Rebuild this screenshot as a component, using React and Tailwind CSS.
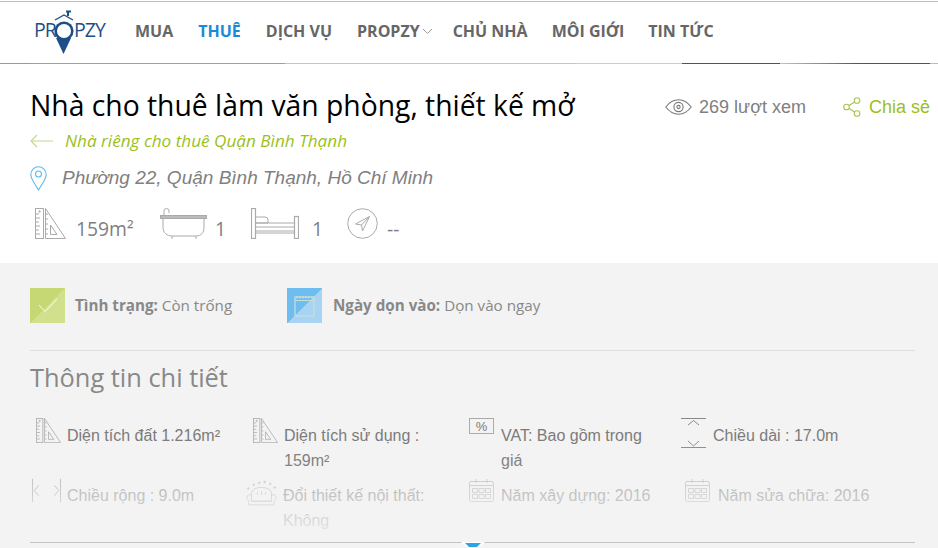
const navItems = [
  { label: 'MUA', cls: 'text-[#666] mr-[25px]' },
  { label: 'THUÊ', cls: 'text-[#1b8ad6] mr-[25px]' },
  { label: 'DỊCH VỤ', cls: 'text-[#666] mr-[25px]' },
  { label: 'PROPZY', cls: 'text-[#666]', caret: true },
  { label: 'CHỦ NHÀ', cls: 'text-[#666] mr-[24px]' },
  { label: 'MÔI GIỚI', cls: 'text-[#666] mr-[24px]' },
  { label: 'TIN TỨC', cls: 'text-[#666]' },
];

function Logo() {
  return (
    <div className="relative w-[72px] h-[50px] mt-[1px] shrink-0">
      <span className="absolute left-0 top-[8px] text-[19.5px] leading-[24px] font-medium text-[#1d4f86] font-['Open_Sans',sans-serif] tracking-[-0.9px]">PR</span>
      <span className="absolute left-[40px] top-[8px] text-[19.5px] leading-[24px] font-medium text-[#1d4f86] font-['Open_Sans',sans-serif] tracking-[-1px]">PZY</span>
      <svg className="absolute left-[15px] top-0" width="30" height="46" viewBox="0 0 30 46" fill="none">
        <path d="M6 10 L15 5 L24 10" stroke="#1d4f86" strokeWidth="1.4" />
        <path d="M19 6 V1.5 M17 1.5 H22" stroke="#1d4f86" strokeWidth="2" />
        <path d="M14.5 44 L7 28 L22 28 Z" fill="#1d4f86" />
        <circle cx="15" cy="21" r="9.6" fill="#1d4f86" />
        <circle cx="15" cy="21" r="7" fill="#fff" />
      </svg>
    </div>
  );
}

function RulerIcon({ w = 31, h = 31 }) {
  return (
    <svg width={w} height={h} viewBox="0 0 31 31" fill="none" stroke="#aaa" strokeWidth="1">
      <rect x="0.5" y="0.5" width="8" height="30" />
      <path d="M1 6h3M1 10h4M1 14h3M1 18h4M1 22h3M1 26h4" />
      <circle cx="4.5" cy="3.5" r="0.8" />
      <path d="M10.5 0.5 L30.5 30.5 H10.5 Z" />
      <path d="M15.5 17 L22 26.5 H15.5 Z" />
      <path d="M11 6h2M11 11h2M11 16h2M11 21h2M11 26h2" />
    </svg>
  );
}

function BathIcon() {
  return (
    <svg width="48" height="32" viewBox="0 0 48 32" fill="none" stroke="#aaa" strokeWidth="1">
      <path d="M4 9 V4 A2.5 2.5 0 0 1 9 4 V6" />
      <rect x="0.5" y="8.5" width="46" height="3" fill="#bbb" />
      <path d="M3 12 V20 C3 26 7 29 12 29 H36 C41 29 44 26 44 20 V12" />
      <path d="M12 29 V32 M36 29 V32" />
    </svg>
  );
}

function BedIcon() {
  return (
    <svg width="48" height="31" viewBox="0 0 48 31" fill="none" stroke="#aaa" strokeWidth="1">
      <rect x="0.5" y="0.5" width="4" height="30" strokeWidth="1.2" />
      <rect x="43.5" y="8.5" width="4" height="22" strokeWidth="1.2" />
      <path d="M5 15 H43 M5 19 H43 M5 23 H43 M5 25 H43" />
      <path d="M5 9 H14 A3 3 0 0 1 17 12 V15 H5" />
    </svg>
  );
}

function CompassIcon() {
  return (
    <svg width="31" height="31" viewBox="0 0 31 31" fill="none" stroke="#aaa" strokeWidth="1">
      <circle cx="15.5" cy="15.5" r="14.8" />
      <path d="M22.5 8.5 L8.5 16 L14.5 17 L15.5 23 Z" />
      <path d="M22.5 8.5 L14.5 17" />
    </svg>
  );
}

function EyeIcon() {
  return (
    <svg width="27" height="16" viewBox="0 0 27 16" fill="none" stroke="#777" strokeWidth="1.1">
      <path d="M0.8 8 C5 2.5 9 0.8 13.5 0.8 C18 0.8 22 2.5 26.2 8 C22 13.5 18 15.2 13.5 15.2 C9 15.2 5 13.5 0.8 8 Z" />
      <circle cx="13.5" cy="8" r="4.6" />
      <circle cx="13.5" cy="8" r="1.6" />
    </svg>
  );
}

function ShareIcon() {
  return (
    <svg width="18" height="20" viewBox="0 0 18 20" fill="none" stroke="#a5c64a" strokeWidth="1.1">
      <circle cx="14" cy="3.5" r="2.8" />
      <circle cx="3.5" cy="10" r="2.8" />
      <circle cx="14" cy="16.5" r="2.8" />
      <path d="M6 8.5 L11.6 5 M6 11.5 L11.6 15" />
    </svg>
  );
}

function CalendarSmall() {
  return (
    <svg width="25" height="24" viewBox="0 0 25 24" fill="none" stroke="#aaa" strokeWidth="1">
      <path d="M0.5 5 A1.5 1.5 0 0 1 2 3.5 H23 A1.5 1.5 0 0 1 24.5 5 V22 A1.5 1.5 0 0 1 23 23.5 H2 A1.5 1.5 0 0 1 0.5 22 Z" />
      <path d="M0.5 7.5 H24.5 M7 1 V5 M18 1 V5" />
      <path d="M3.5 10.5h5v4h-5zM10 10.5h5v4h-5zM16.5 10.5h5v4h-5zM3.5 16.5h5v4h-5zM10 16.5h5v4h-5zM16.5 16.5h5v4h-5z" />
    </svg>
  );
}

function PercentIcon() {
  return (
    <div className="w-[25px] h-[16px] border border-[#aaa] flex items-center justify-center text-[13px] leading-none text-[#777] font-['Liberation_Sans',sans-serif]">%</div>
  );
}

function LengthIcon() {
  return (
    <svg width="25" height="31" viewBox="0 0 25 31" fill="none" stroke="#888" strokeWidth="1">
      <path d="M0 0.5 H25 M0 29.5 H25" />
      <path d="M7 7 L12.5 2.5 L18 7 M7 23 L12.5 28 L18 23" />
    </svg>
  );
}

function WidthIcon() {
  return (
    <svg width="31" height="25" viewBox="0 0 31 25" fill="none" stroke="#888" strokeWidth="1">
      <path d="M0.5 0 V25 M30.5 0 V25" />
      <path d="M7 7 L2.5 12.5 L7 18 M24 7 L28.5 12.5 L24 18" />
    </svg>
  );
}

function SofaIcon() {
  return (
    <svg width="34" height="30" viewBox="0 0 34 30" fill="none" stroke="#aaa" strokeWidth="1">
      <path d="M1 10h3M2.5 8.5v3M7 6h3M8.5 4.5v3M13 4h3M14.5 2.5v3M19 3h3M20.5 1.5v3M25 5h3M26.5 3.5v3M30 9h3M31.5 7.5v3" />
      <path d="M6 19 V16 C6 11 11 9 17 9 C23 9 28 11 28 16 V19" />
      <path d="M1 20 A2.8 2.8 0 0 1 6 18 V24 H28 V18 A2.8 2.8 0 0 1 33 20 C33 22 31 23 31 24 V28 H3 V24 C3 23 1 22 1 20 Z" />
      <path d="M6 24 H28 M12 14 L13 17 M17 13 V17 M22 14 L21 17" />
    </svg>
  );
}

function DetailItem({ icon, iconCls, children, textCls = 'pl-[6px]' }) {
  return (
    <div className="flex items-start h-[60px]">
      <div className={`shrink-0 w-[31px] flex justify-start ${iconCls}`}>{icon}</div>
      <div className={`${textCls} pt-[5px] pr-[24px] text-[16px] leading-[25px] text-[#777]`}>{children}</div>
    </div>
  );
}

export default function App() {
  return (
    <div className="relative w-[938px] h-[548px] overflow-hidden bg-white font-['Liberation_Sans',sans-serif]">
      {/* Header */}
      <header className="h-[63px] mt-px border-t border-[#bdbdbd] relative flex items-start pl-[34px]">
        <div className="pt-[7px]"><Logo /></div>
        <nav className="flex items-center h-[58px] ml-[29px] font-['Open_Sans',sans-serif] font-bold text-[16px] whitespace-nowrap">
          {navItems.map((item) => (
            <div key={item.label} className={`flex items-center ${item.cls}`}>
              {item.label}
              {item.caret && (
                <svg className="ml-[2px] mr-[20px]" width="11" height="7" viewBox="0 0 11 7" fill="none" stroke="#999" strokeWidth="1">
                  <path d="M1 1 L5.5 5.5 L10 1" />
                </svg>
              )}
            </div>
          ))}
        </nav>
        {/* thin strip of the slider showing under the header */}
        <div className="absolute left-0 right-0 bottom-0 h-[1px] bg-[linear-gradient(to_right,#9a9a9a_0,#9a9a9a_30px,#7fa9c9_30px,#7fa9c9_285px,#9cd0f0_285px,#9cd0f0_576px,#c8ccd4_576px,#c8ccd4_682px,#5d5048_682px,#5d5048_780px,#c4c4c4_780px,#5d5048_860px,#5d5048_930px,#bbb_930px)]" />
      </header>

      {/* Title block */}
      <section className="h-[199px] px-[30px] pt-[20px]">
        <div className="flex items-center justify-between h-[42px]">
          <h1 className="text-[28.3px] leading-[42px] text-black font-['Open_Sans',sans-serif] font-normal whitespace-nowrap">Nhà cho thuê làm văn phòng, thiết kế mở</h1>
          <div className="flex items-center text-[18px] mt-[4px] -mr-[22px] whitespace-nowrap">
            <EyeIcon />
            <span className="ml-[7px] text-[#808080]">269 lượt xem</span>
            <span className="ml-[37px]"><ShareIcon /></span>
            <span className="ml-[8px] text-[#9cbf1b]">Chia sẻ</span>
          </div>
        </div>
        <div className="flex items-center h-[24px] mt-[3px]">
          <svg width="23" height="14" viewBox="0 0 23 14" fill="none" stroke="#c4d88a" strokeWidth="1.1">
            <path d="M7 1 L1 7 L7 13 M1 7 H23" />
          </svg>
          <span className="ml-[12px] text-[17.15px] italic text-[#9cbf1b] font-['Open_Sans',sans-serif]">Nhà riêng cho thuê Quận Bình Thạnh</span>
        </div>
        <div className="flex items-center h-[28px] mt-[11px]">
          <svg width="17" height="25" viewBox="0 0 17 25" fill="none" stroke="#62b8ee" strokeWidth="1.1">
            <path d="M8.5 24 C5 18 0.8 13 0.8 8.5 A7.7 7.7 0 0 1 16.2 8.5 C16.2 13 12 18 8.5 24 Z" />
            <circle cx="8.5" cy="8" r="3" />
          </svg>
          <span className="ml-[15px] text-[19px] italic text-[#808080]">Phường 22, Quận Bình Thạnh, Hồ Chí Minh</span>
        </div>
        <div className="flex items-end h-[36px] mt-[11px] pl-[5px] text-[#808080] text-[19.3px] leading-[26px] font-['Open_Sans',sans-serif]">
          <RulerIcon />
          <span className="ml-[10px] w-[84px] mb-[-3px]">159m²</span>
          <BathIcon />
          <span className="ml-[7px] w-[36px] mb-[-3px]">1</span>
          <BedIcon />
          <span className="ml-[13px] w-[35px] mb-[-3px]">1</span>
          <CompassIcon />
          <span className="ml-[9px] mb-[-3px]">--</span>
        </div>
      </section>

      {/* Gray panel */}
      <section className="relative h-[285px] bg-[#f3f3f3] px-[23px] pl-[30px]">
        <div className="flex items-center pt-[25px] pb-[27px] border-b border-[#dfdfdf] text-[15.2px] text-[#888] font-['Open_Sans',sans-serif] whitespace-nowrap">
          <div className="w-[35px] h-[35px] bg-[linear-gradient(135deg,#c5d873_0,#c5d873_50%,#d0e08c_50%,#d0e08c_100%)] flex items-center justify-center">
            <svg width="20" height="15" viewBox="0 0 20 15" fill="none" stroke="#eef4d4" strokeWidth="1.1">
              <path d="M1 7 L7 13.5 L19 1" />
            </svg>
          </div>
          <span className="ml-[10px] w-[212px]"><b className="font-bold">Tình trạng:</b> Còn trống</span>
          <div className="w-[35px] h-[35px] bg-[linear-gradient(135deg,#6ebdf0_0,#6ebdf0_50%,#a6d4f2_50%,#a6d4f2_100%)] flex items-center justify-center">
            <svg width="21" height="22" viewBox="0 0 21 22" fill="none" stroke="#c8dfd8" strokeWidth="1.2">
              <rect x="1" y="2" width="19" height="19" />
              <path d="M1 5.5 H20 M3 1v2.5M6 1v2.5M9 1v2.5M12 1v2.5M15 1v2.5M18 1v2.5" />
            </svg>
          </div>
          <span className="ml-[11px]"><b className="font-bold">Ngày dọn vào:</b> Dọn vào ngay</span>
        </div>

        <h2 className="mt-[7px] text-[25.4px] leading-[38px] font-normal text-[#888] font-['Open_Sans',sans-serif]">Thông tin chi tiết</h2>

        <div className="relative grid grid-cols-[217px_217px_217px_217px] mt-[22px]">
          <DetailItem icon={<RulerIcon w={25} h={25} />} iconCls="pl-[6px]">Diện tích đất 1.216m²</DetailItem>
          <DetailItem icon={<RulerIcon w={25} h={25} />} iconCls="pl-[6px]">Diện tích sử dụng : 159m²</DetailItem>
          <DetailItem icon={<PercentIcon />} iconCls="pl-[5px]">VAT: Bao gồm trong giá</DetailItem>
          <DetailItem icon={<LengthIcon />} iconCls="pl-0" textCls="pl-[1px]">Chiều dài : 17.0m</DetailItem>
          <DetailItem icon={<WidthIcon />} iconCls="pl-[2px]" textCls="pl-[6px]">Chiều rộng : 9.0m</DetailItem>
          <DetailItem icon={<SofaIcon />} iconCls="-ml-[1px]" textCls="pl-[6px]">Đổi thiết kế nội thất: Không</DetailItem>
          <DetailItem icon={<CalendarSmall />} iconCls="pl-[5px]">Năm xây dựng: 2016</DetailItem>
          <DetailItem icon={<CalendarSmall />} iconCls="pl-[4px]" textCls="pl-[6px]">Năm sửa chữa: 2016</DetailItem>
          {/* fade out over the collapsed list */}
          <div className="absolute left-0 right-0 top-0 h-[122px] bg-[linear-gradient(to_bottom,rgba(243,243,243,0)_0,rgba(243,243,243,0.1)_50px,rgba(243,243,243,0.5)_62px,rgba(243,243,243,0.85)_110px)] pointer-events-none" />
        </div>

        {/* collapse line + arrow */}
        <div className="absolute left-[30px] w-[885px] top-[279px] border-t border-[#c4c4c4]" />
        <svg className="absolute left-[461px] top-[279px]" width="24" height="5" viewBox="0 0 24 5">
          <path d="M0 0 L24 0 L12 12 Z" fill="#fff" />
          <path d="M4 1 L20 1 L12 9 Z" fill="#2aa3e8" />
        </svg>
      </section>
    </div>
  );
}
